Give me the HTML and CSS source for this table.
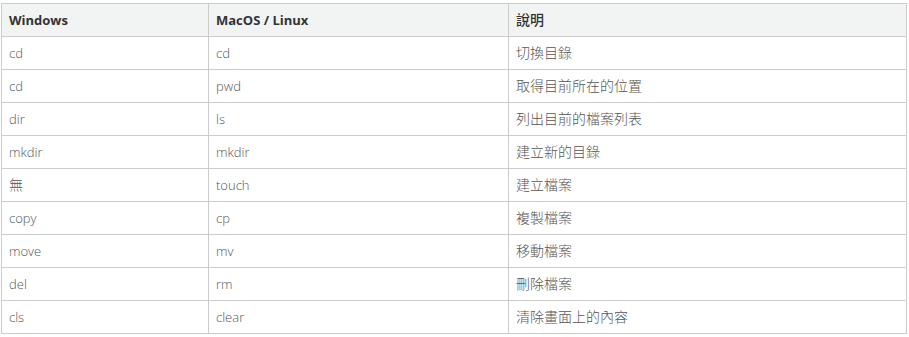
FILE: index.html
```html
<!DOCTYPE html>
<html lang="zh-Hant">
<head>
<meta charset="utf-8">
<link rel="stylesheet" href="styles.css">
</head>
<body>
<table class="cmd-table">
  <colgroup>
    <col class="c1"><col class="c2"><col class="c3">
  </colgroup>
  <thead>
    <tr><th>Windows</th><th>MacOS / Linux</th><th class="zh">說明</th></tr>
  </thead>
  <tbody>
    <tr><td>cd</td><td>cd</td><td class="zh">切換目錄</td></tr>
    <tr><td>cd</td><td>pwd</td><td class="zh">取得目前所在的位置</td></tr>
    <tr><td>dir</td><td>ls</td><td class="zh">列出目前的檔案列表</td></tr>
    <tr><td>mkdir</td><td>mkdir</td><td class="zh">建立新的目錄</td></tr>
    <tr><td class="zh">無</td><td>touch</td><td class="zh">建立檔案</td></tr>
    <tr><td>copy</td><td>cp</td><td class="zh">複製檔案</td></tr>
    <tr><td>move</td><td>mv</td><td class="zh">移動檔案</td></tr>
    <tr><td>del</td><td>rm</td><td class="zh">刪除檔案</td></tr>
    <tr><td>cls</td><td>clear</td><td class="zh">清除畫面上的內容</td></tr>
  </tbody>
</table>
</body>
</html>
```
FILE: styles.css
```css
html, body {
  margin: 0;
  padding: 0;
  background: #ffffff;
}
body {
  padding: 3px 0 0 1px;
  font-family: "Open Sans", "Noto Sans CJK TC", sans-serif;
  font-size: 13px;
}
.cmd-table {
  border-collapse: collapse;
  table-layout: fixed;
  width: 905px;
}
.c1 { width: 207px; }
.c2 { width: 300px; }
.c3 { width: 398px; }
.cmd-table th,
.cmd-table td {
  border: 1px solid #cccccc;
  height: 33px;
  padding: 0 7px;
  box-sizing: border-box;
  text-align: left;
  vertical-align: middle;
  line-height: 16px;
}
.cmd-table th {
  background: #f2f3f3;
  color: #333333;
  font-weight: 700;
}
.cmd-table td {
  color: #555555;
  font-weight: 300;
}
.cmd-table .zh {
  font-size: 14px;
}
.cmd-table th.zh {
  font-weight: 500;
}
```
